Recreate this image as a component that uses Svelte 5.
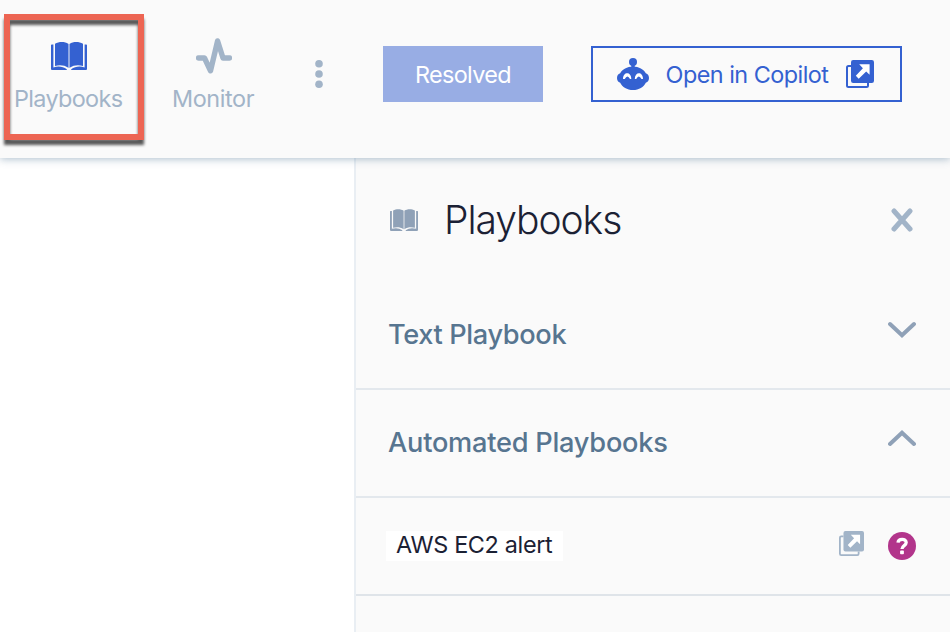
<script>
  let textOpen = $state(false);
  let automatedOpen = $state(true);
</script>

{#snippet book()}
  <svg class="book" viewBox="0 0 36 28" fill="currentColor" aria-hidden="true">
    <path d="M0 3.2Q0 2.5.8 2.5H2.4V25.4C7 23.7 12 24.3 15.8 27.2V28H1Q0 28 0 27Z" />
    <path d="M36 3.2Q36 2.5 35.2 2.5H33.6V25.4C29 23.7 24 24.3 20.2 27.2V28H35Q36 28 36 27Z" />
    <path d="M4 1.8C8-.6 14-.6 17.4 2V25.8C13.5 23.2 8.5 22.7 4 24.1Z" />
    <path d="M32 1.8C28-.6 22-.6 18.6 2V25.8C22.5 23.2 27.5 22.7 32 24.1Z" />
    <path d="M17.3 1.8h1.4v24h-1.4z" opacity=".3" />
  </svg>
{/snippet}

{#snippet external()}
  <svg class="external" viewBox="0 0 28 28" fill="none" aria-hidden="true">
    <path d="M5 6H2.5Q1 6 1 7.5V25.5Q1 27 2.5 27H20.5Q22 27 22 25.5V23" stroke="currentColor" stroke-width="2" />
    <rect x="5" width="23" height="23" rx="2.2" fill="currentColor" />
    <path d="M13.2 4.2H23.6V14.8L20.2 11.6 12.7 18.7 9.8 15.8 16.9 8.2Z" fill="#fff" />
  </svg>
{/snippet}

{#snippet chevron(up)}
  <svg class="chevron" class:up viewBox="0 0 28 18" fill="none" stroke="currentColor" stroke-width="4" stroke-linecap="round" aria-hidden="true">
    <path d="M2 3 14 14.3 26 3" />
  </svg>
{/snippet}

<div class="page">
  <header>
    <div class="nav">
      <div class="tab active">
        {@render book()}
        <span class="t-playbooks">Playbooks</span>
      </div>
      <div class="tab monitor">
        <svg class="pulse" viewBox="0 0 36 36" fill="none" stroke="currentColor" stroke-width="5.4" stroke-linejoin="round" aria-hidden="true">
          <path d="M2.5 20H8.5L14.5 32.8 21.6 3 27 20H33.5" stroke-linecap="round" />
        </svg>
        <span class="t-monitor">Monitor</span>
      </div>
    </div>
    <svg class="dots" viewBox="0 0 8 28" fill="currentColor" aria-label="More">
      <circle cx="4" cy="3.8" r="3.8" /><circle cx="4" cy="14" r="3.8" /><circle cx="4" cy="24.2" r="3.8" />
    </svg>
    <button class="resolved"><span>Resolved</span></button>
    <button class="copilot">
      <svg class="robot" viewBox="0 0 32 32" aria-hidden="true">
        <g fill="currentColor">
          <circle cx="16" cy="4" r="4" />
          <path d="M14.3 6H17.7V9H14.3Z" />
          <path d="M16 8.5C22 8.5 26.7 11.5 28.8 15.2 31 16 32 17.7 32 20S31 24 28.8 24.7C26.7 29 22 32 16 32S5.3 29 3.2 24.7C1 24 0 22.3 0 20S1 16 3.2 15.2C5.3 11.5 10 8.5 16 8.5Z" />
        </g>
        <path d="M6 21C6 13.4 14.3 13.4 14.3 21H13Q10.4 15.9 7.8 21ZM17.8 21C17.8 13.4 26 13.4 26 21H24.5Q21.8 15.9 19.2 21Z" fill="#fff" />
      </svg>
      <span>Open in Copilot</span>
      {@render external()}
    </button>
    <div class="highlight"></div>
  </header>

  <main>
    <div class="canvas"></div>
    <aside>
      <div class="title">
        {@render book()}
        <h1>Playbooks</h1>
        <svg class="close" viewBox="0 0 22 24" stroke="currentColor" stroke-width="5" stroke-linecap="round" aria-label="Close">
          <path d="M3 3 19 21M19 3 3 21" />
        </svg>
      </div>
      <div class="section" role="button" tabindex="0" onclick={() => (textOpen = !textOpen)} onkeydown={() => {}}>
        <h2 class="t-text">Text Playbook</h2>
        {@render chevron(textOpen)}
      </div>
      <div class="section" role="button" tabindex="0" onclick={() => (automatedOpen = !automatedOpen)} onkeydown={() => {}}>
        <h2 class="t-auto">Automated Playbooks</h2>
        {@render chevron(automatedOpen)}
      </div>
      {#if automatedOpen}
        <div class="item">
          <div class="name"><span>AWS EC2 alert</span></div>
          {@render external()}
          <svg class="help" viewBox="0 0 28 28" aria-label="Help">
            <circle cx="14" cy="14" r="14" fill="#b2358b" />
            <path d="M10 10.7C10.3 6.4 18.2 6.2 18.2 10.6 18.2 13.7 14 13.5 14 17" fill="none" stroke="#fff" stroke-width="3.3" />
            <rect x="12.1" y="18.6" width="3.8" height="3.6" rx=".8" fill="#fff" />
          </svg>
        </div>
      {/if}
    </aside>
  </main>
</div>

<style>
  :global(body) { margin: 0; }
  .page {
    width: 950px;
    height: 632px;
    overflow: hidden;
    display: flex;
    flex-direction: column;
    background: #fff;
    font-family: Inter, "Liberation Sans", sans-serif;
    font-size: 23.4px;
    line-height: 28px;
  }
  svg { display: block; flex: none; }
  span, h1, h2 { white-space: nowrap; }
  header {
    position: relative;
    z-index: 1;
    box-sizing: border-box;
    flex: none;
    height: 158px;
    display: flex;
    align-items: flex-start;
    background: #fafafa;
    box-shadow: 0 1px 8px rgba(70, 110, 145, .45);
  }
  .nav { display: flex; width: 315px; color: #a2b4c8; font-weight: 400; }
  .tab { box-sizing: border-box; display: flex; flex-direction: column; padding: 42px 0 0 14px; width: 157px; }
  .tab .book { width: 36px; height: 28px; margin: 0 0 15px 37px; color: #3461d1; }
  .monitor { padding: 38px 0 0 15px; }
  .pulse { width: 36px; height: 36px; margin: 0 0 11px 24px; }
  .dots { width: 8px; height: 28px; margin-top: 60px; color: #a2b4c8; }
  button {
    box-sizing: border-box;
    height: 56px;
    margin-top: 46px;
    border: 0;
    border-radius: 0;
    font: inherit;
    font-weight: 400;
    display: flex;
    align-items: center;
  }
  .resolved { width: 160px; margin-left: 60px; padding: 2px 0 0 32px; background: #98ade4; color: #fff; letter-spacing: -.65px; }
  .copilot { width: 311px; margin-left: 48px; padding: 0 0 0 24px; border: 2px solid #3461d1; background: #fafafa; color: #3461d1; letter-spacing: -.52px; }
  .robot { width: 32px; height: 32px; margin-right: 16px; }
  .copilot span { width: 164px; margin-right: 17px; padding-top: 2px; }
  .external { width: 28px; height: 28px; }
  .highlight {
    position: absolute;
    box-sizing: border-box;
    left: 4px;
    top: 14px;
    width: 140px;
    height: 126px;
    border: 6px solid #ed6553;
    filter: drop-shadow(0 5px 1.5px rgba(0, 0, 0, .65));
  }
  main { flex: 1; display: flex; min-height: 0; }
  .canvas { width: 354px; }
  aside { box-sizing: border-box; width: 596px; border-left: 2px solid #e9eef3; background: #fafafa; }
  .title { display: flex; height: 124px; padding-left: 34px; color: #a2b4c8; }
  .title .book { width: 28px; height: 22px; margin-top: 51px; color: #8fa1b7; }
  h1 { width: 447px; margin: 38px 0 0 26px; font-size: 39px; line-height: 48px; font-weight: 300; letter-spacing: -1.05px; color: #1b2134; }
  .close { width: 22px; height: 24px; margin-top: 50px; }
  .section { box-sizing: border-box; display: flex; height: 108px; padding: 35px 34px 0 32px; justify-content: space-between; border-bottom: 2px solid #e3e8ed; color: #8fa1b7; outline: 0; }
  h2 { margin: 0; font-size: 27.2px; line-height: 36px; font-weight: 500; color: #577590; }
  .chevron { width: 28px; height: 18px; margin-top: 4px; }
  .chevron.up { transform: rotate(180deg); }
  .item { box-sizing: border-box; display: flex; height: 98px; padding: 33px 34px 0 30px; border-bottom: 2px solid #dfe4e9; color: #a2b4c8; }
  .name { box-sizing: border-box; width: 177px; height: 30px; padding: 0 0 0 10px; margin-right: 276px; background: #fff; color: #1b2134; letter-spacing: -.33px; }
  .item .external { width: 25px; height: 25px; }
  .help { width: 28px; height: 28px; margin: 1px 0 0 24px; }
  .t-playbooks { letter-spacing: -.65px; }
  .t-monitor { letter-spacing: -.4px; }
  .t-text { letter-spacing: -.37px; }
  .t-auto { letter-spacing: -.24px; }
</style>
